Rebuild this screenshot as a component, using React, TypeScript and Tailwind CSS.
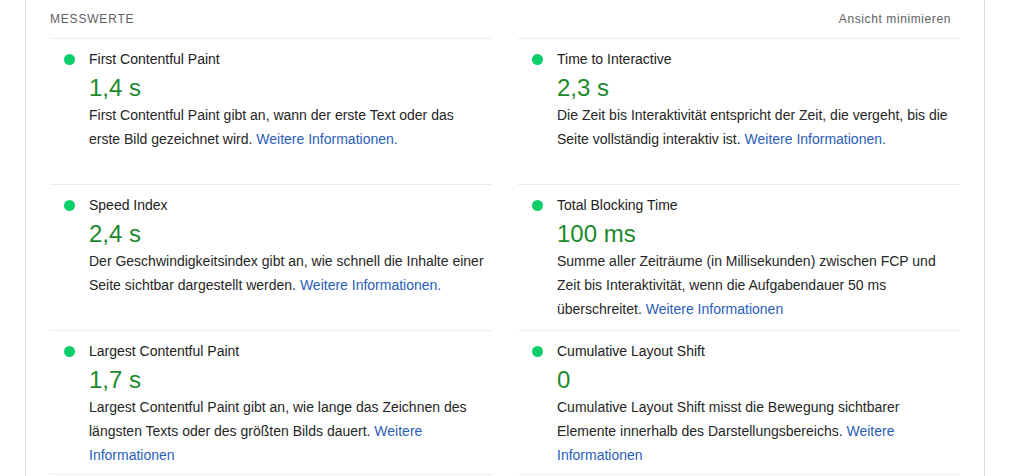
import React from 'react';

type Metric = {
  title: string;
  value: string;
  text: string;
  link: string;
};

const metrics: Metric[] = [
  {
    title: 'First Contentful Paint',
    value: '1,4 s',
    text: 'First Contentful Paint gibt an, wann der erste Text oder das erste Bild gezeichnet wird.',
    link: 'Weitere Informationen.',
  },
  {
    title: 'Time to Interactive',
    value: '2,3 s',
    text: 'Die Zeit bis Interaktivität entspricht der Zeit, die vergeht, bis die Seite vollständig interaktiv ist.',
    link: 'Weitere Informationen.',
  },
  {
    title: 'Speed Index',
    value: '2,4 s',
    text: 'Der Geschwindigkeitsindex gibt an, wie schnell die Inhalte einer Seite sichtbar dargestellt werden.',
    link: 'Weitere Informationen.',
  },
  {
    title: 'Total Blocking Time',
    value: '100 ms',
    text: 'Summe aller Zeiträume (in Millisekunden) zwischen FCP und Zeit bis Interaktivität, wenn die Aufgabendauer 50 ms überschreitet.',
    link: 'Weitere Informationen',
  },
  {
    title: 'Largest Contentful Paint',
    value: '1,7 s',
    text: 'Largest Contentful Paint gibt an, wie lange das Zeichnen des längsten Texts oder des größten Bilds dauert.',
    link: 'Weitere Informationen',
  },
  {
    title: 'Cumulative Layout Shift',
    value: '0',
    text: 'Cumulative Layout Shift misst die Bewegung sichtbarer Elemente innerhalb des Darstellungsbereichs.',
    link: 'Weitere Informationen',
  },
];

const MetricCell: React.FC<{ metric: Metric; last: boolean }> = ({ metric, last }) => (
  <div
    className={
      last
        ? 'flex border-y border-[#ebebeb] pt-[10px] pb-[7px] min-h-[144px]'
        : 'flex border-t border-[#ebebeb] pt-[10px] pb-[8px] min-h-[146px]'
    }
  >
    <div className="w-[39px] shrink-0 pl-[14px] pt-[5px]">
      <span className="block h-[11px] w-[11px] rounded-full bg-[#0cce6b]" />
    </div>
    <div className="flex w-[399px] flex-col">
      <p className="text-[14px] leading-[20px] text-[#212121]">{metric.title}</p>
      <p className="text-[24px] leading-[34px] pt-[2px] text-[#1c8a2c]">{metric.value}</p>
      <p className="-mt-[2px] text-[14px] leading-[24px] text-[#262626]">
        {metric.text} <a className="text-[#2a5eb8]">{metric.link}</a>
      </p>
    </div>
  </div>
);

export default function App() {
  return (
    <div className="h-[476px] overflow-hidden bg-white font-['Liberation_Sans',Arial,sans-serif]">
      <div className="ml-[25px] h-full w-[960px] border-x border-[#dcdcdc] pl-[24px] pr-[24px]">
        <div className="flex h-[38px] items-center justify-between pr-[9px]">
          <span className="text-[12px] tracking-[0.8px] text-[#5f5f5f]">MESSWERTE</span>
          <span className="text-[12px] tracking-[0.6px] text-[#5f5f5f]">Ansicht minimieren</span>
        </div>
        <div className="grid grid-cols-2 gap-x-[26px]">
          {metrics.map((m, i) => (
            <MetricCell key={m.title} metric={m} last={i >= 4} />
          ))}
        </div>
      </div>
    </div>
  );
}
